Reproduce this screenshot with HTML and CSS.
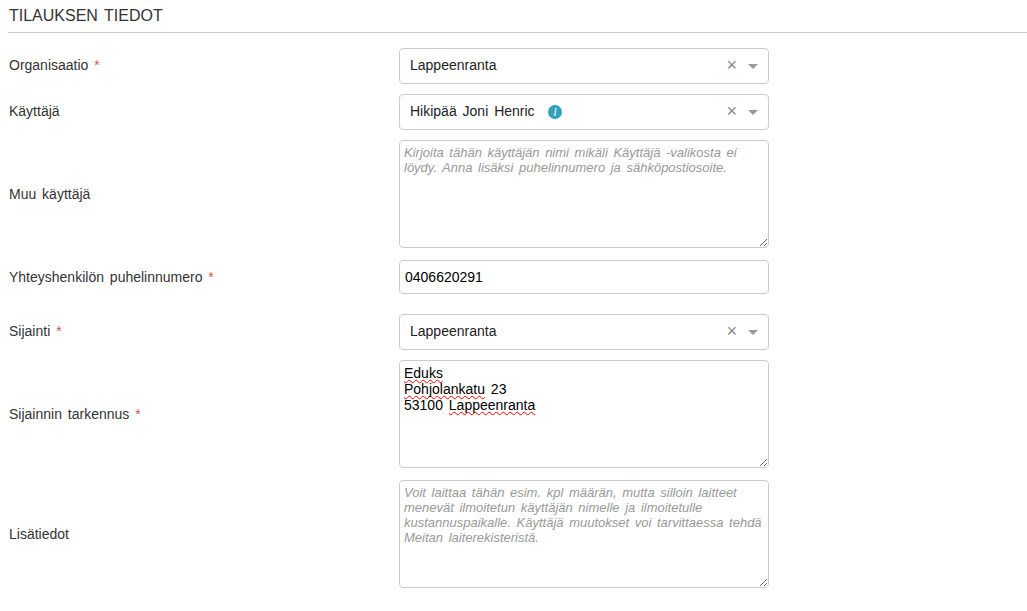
FILE: index.html
```html
<!DOCTYPE html>
<html lang="fi">
<head>
    <meta charset="UTF-8">
    <title>Tilauksen tiedot</title>
    <link rel="stylesheet" href="styles.css">
</head>
<body>
    <h3 class="section-title">TILAUKSEN TIEDOT</h3>

    <div class="form-row row-select">
        <label>Organisaatio <span class="required">*</span></label>
        <div class="select-box">
            <span class="select-value">Lappeenranta</span>
            <span class="select-clear">×</span>
            <span class="select-arrow"></span>
        </div>
    </div>

    <div class="form-row row-select">
        <label>Käyttäjä</label>
        <div class="select-box">
            <span class="select-value">Hikipää Joni Henric</span>
            <svg class="info-icon" viewBox="0 0 14 14" width="14" height="14">
                <circle cx="7" cy="7" r="7" fill="#31a3c0"/>
                <path d="M7.1 2.9h1.7l-.3 1.6H6.8zM6.7 5.6h1.7l-1 4.1h.8l-.2.9H5.6l.2-.9h.4l.8-3.2h-.5z" fill="#fff"/>
            </svg>
            <span class="select-clear">×</span>
            <span class="select-arrow"></span>
        </div>
    </div>

    <div class="form-row row-area">
        <label>Muu käyttäjä</label>
        <textarea placeholder="Kirjoita tähän käyttäjän nimi mikäli Käyttäjä -valikosta ei löydy. Anna lisäksi puhelinnumero ja sähköpostiosoite."></textarea>
    </div>

    <div class="form-row row-input">
        <label>Yhteyshenkilön puhelinnumero <span class="required">*</span></label>
        <input type="text" value="0406620291">
    </div>

    <div class="form-row row-select">
        <label>Sijainti <span class="required">*</span></label>
        <div class="select-box">
            <span class="select-value">Lappeenranta</span>
            <span class="select-clear">×</span>
            <span class="select-arrow"></span>
        </div>
    </div>

    <div class="form-row row-area">
        <label>Sijainnin tarkennus <span class="required">*</span></label>
        <div class="area-filled">
            <span class="typo">Eduks</span><br>
            <span class="typo">Pohjolankatu</span> 23<br>
            53100 <span class="typo">Lappeenranta</span>
        </div>
    </div>

    <div class="form-row row-area">
        <label>Lisätiedot</label>
        <textarea placeholder="Voit laittaa tähän esim. kpl määrän, mutta silloin laitteet menevät ilmoitetun käyttäjän nimelle ja ilmoitetulle kustannuspaikalle. Käyttäjä muutokset voi tarvittaessa tehdä Meitan laiterekisteristä."></textarea>
    </div>
</body>
</html>
```

FILE: styles.css
```css
body {
    margin: 0;
    padding: 0 0 0 9px;
    background-color: #fff;
    color: #333;
    font-family: "Liberation Sans", Arial, sans-serif;
    font-size: 14px;
    word-spacing: 2px;
}
.section-title {
    margin: 0 0 15px -1px;
    padding: 7px 0 8px 1px;
    height: 17px;
    line-height: 17px;
    font-size: 16px;
    font-weight: normal;
    border-bottom: 1px solid #ccc;
}
.form-row {
    display: grid;
    grid-template-columns: 390px 370px;
    align-items: center;
}
.row-select {
    height: 36px;
    margin-bottom: 10px;
}
.row-select label {
    padding-bottom: 2px;
}
.row-area {
    height: 108px;
    margin-bottom: 12px;
}
.row-input {
    height: 34px;
    margin-bottom: 20px;
}
.required {
    color: #d9534f;
}
.select-box {
    display: flex;
    align-items: center;
    box-sizing: border-box;
    height: 36px;
    padding: 0 10px;
    border: 1px solid #ccc;
    border-radius: 4px;
    color: #222;
}
.select-value {
    margin-right: 13px;
    padding-bottom: 2px;
}
.info-icon {
    display: block;
}
.select-clear {
    margin-left: auto;
    color: #888;
    font-size: 18px;
    line-height: 18px;
    margin-top: -3px;
}
.select-arrow {
    width: 0;
    height: 0;
    margin-left: 11px;
    border-left: 5px solid transparent;
    border-right: 5px solid transparent;
    border-top: 5px solid #999;
}
textarea, input, .area-filled {
    display: block;
    box-sizing: border-box;
    width: 370px;
    margin: 0;
    border: 1px solid #ccc;
    border-radius: 4px;
    font-family: "Liberation Sans", Arial, sans-serif;
    font-size: 14px;
    word-spacing: 2px;
    color: #000;
    background-color: #fff;
}
textarea, .area-filled {
    height: 108px;
    resize: vertical;
    overflow: auto;
}
textarea {
    padding: 4px;
    font-size: 13px;
    line-height: 15px;
}
.area-filled {
    padding: 4px;
    line-height: 16px;
}
input {
    height: 34px;
    padding: 0 5px;
}
textarea::placeholder {
    color: #999;
    font-style: italic;
}
.typo {
    text-decoration: underline wavy #f00 1px;
    text-decoration-skip-ink: none;
    text-underline-offset: 1px;
}
```
